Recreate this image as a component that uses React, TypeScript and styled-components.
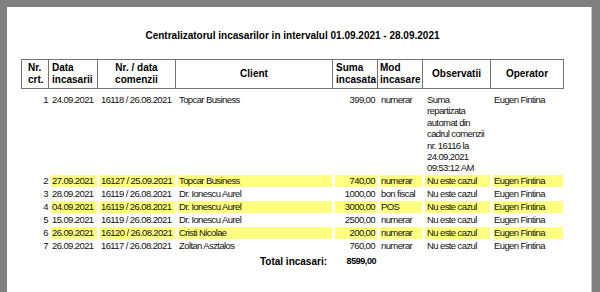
import React from "react";
import styled, { createGlobalStyle } from "styled-components";

const COLS = "28px 49px 78px 157px 45px 45px 68px 73px";

type Payment = {
  nr: number;
  date: string;
  order: string;
  client: string;
  sum: string;
  mode: string;
  note: string[];
  operator: string;
  hl?: boolean;
};

const payments: Payment[] = [
  {
    nr: 1,
    date: "24.09.2021",
    order: "16118 / 26.08.2021",
    client: "Topcar Business",
    sum: "399,00",
    mode: "numerar",
    note: [
      "Suma",
      "repartizata",
      "automat din",
      "cadrul comenzii",
      "nr. 16116 la",
      "24.09.2021",
      "09:53:12 AM",
    ],
    operator: "Eugen Fintina",
  },
  { nr: 2, date: "27.09.2021", order: "16127 / 25.09.2021", client: "Topcar Business", sum: "740,00", mode: "numerar", note: ["Nu este cazul"], operator: "Eugen Fintina", hl: true },
  { nr: 3, date: "28.09.2021", order: "16119 / 26.08.2021", client: "Dr. Ionescu Aurel", sum: "1000,00", mode: "bon fiscal", note: ["Nu este cazul"], operator: "Eugen Fintina" },
  { nr: 4, date: "04.09.2021", order: "16119 / 26.08.2021", client: "Dr. Ionescu Aurel", sum: "3000,00", mode: "POS", note: ["Nu este cazul"], operator: "Eugen Fintina", hl: true },
  { nr: 5, date: "15.09.2021", order: "16119 / 26.08.2021", client: "Dr. Ionescu Aurel", sum: "2500,00", mode: "numerar", note: ["Nu este cazul"], operator: "Eugen Fintina" },
  { nr: 6, date: "26.09.2021", order: "16120 / 26.08.2021", client: "Cristi Nicolae", sum: "200,00", mode: "numerar", note: ["Nu este cazul"], operator: "Eugen Fintina", hl: true },
  { nr: 7, date: "26.09.2021", order: "16117 / 26.08.2021", client: "Zoltan Asztalos", sum: "760,00", mode: "numerar", note: ["Nu este cazul"], operator: "Eugen Fintina" },
];

const App = () => {
  return (
    <>
      <GlobalStyle />
      <Page>
        <Sheet>
          <Title>Centralizatorul incasarilor in intervalul 01.09.2021 - 28.09.2021</Title>
          <HeadRow>
            <HeadCell $pl={6}>Nr.<br />crt.</HeadCell>
            <HeadCell $pl={3}>Data<br />incasarii</HeadCell>
            <HeadCell $center>Nr. / data<br />comenzii</HeadCell>
            <HeadCell $center>Client</HeadCell>
            <HeadCell $pl={3}>Suma<br />incasata</HeadCell>
            <HeadCell $pl={2}>Mod<br />incasare</HeadCell>
            <HeadCell $center>Observatii</HeadCell>
            <HeadCell $center>Operator</HeadCell>
          </HeadRow>
          <Body>
            {payments.map((p) => (
              <Row key={p.nr}>
                <NrCell>{p.nr}</NrCell>
                <Cell $hl={p.hl}>{p.date}</Cell>
                <Cell $hl={p.hl}>{p.order}</Cell>
                <Cell $hl={p.hl}>{p.client}</Cell>
                <Cell $hl={p.hl} $right>{p.sum}</Cell>
                <Cell $hl={p.hl}>{p.mode}</Cell>
                <Cell $hl={p.hl} $pl={2}>
                  {p.note.map((line) => (
                    <NoteLine key={line} $multi={p.note.length > 1}>{line}</NoteLine>
                  ))}
                </Cell>
                <Cell $hl={p.hl}>{p.operator}</Cell>
              </Row>
            ))}
          </Body>
          <TotalRow>
            <TotalLabel>Total incasari:</TotalLabel>
            <TotalValue>8599,00</TotalValue>
          </TotalRow>
        </Sheet>
      </Page>
    </>
  );
};

export default App;

const GlobalStyle = createGlobalStyle`
  html, body {
    margin: 0;
    padding: 0;
    width: 600px;
    height: 292px;
    overflow: hidden;
    background: #808080;
  }
`;

const Page = styled.div`
  margin: 7px 0 0 7px;
  width: 585px;
  height: 285px;
  background: #fff;
  border-right: 1px solid #c4c4c4;
  box-sizing: border-box;
  padding: 23px 0 0 14px;
  font-family: "Liberation Sans", Arial, sans-serif;
  color: #111;
`;

const Sheet = styled.div`
  width: 543px;
  display: flex;
  flex-direction: column;
`;

const Title = styled.div`
  text-align: center;
  font-weight: bold;
  font-size: 10px;
  line-height: 12px;
  color: #000;
  margin-bottom: 17px;
`;

const HeadRow = styled.div`
  display: grid;
  grid-template-columns: ${COLS};
  height: 30px;
  box-sizing: border-box;
  border-top: 1px solid #737373;
  border-bottom: 1px solid #737373;
`;

const HeadCell = styled.div<{ $center?: boolean; $pl?: number }>`
  display: flex;
  flex-direction: column;
  justify-content: center;
  align-items: ${(p) => (p.$center ? "center" : "flex-start")};
  text-align: ${(p) => (p.$center ? "center" : "left")};
  padding-left: ${(p) => (p.$pl ? p.$pl : 0)}px;
  border-right: 1px solid #737373;
  font-weight: bold;
  font-size: 10px;
  line-height: 12.5px;
  white-space: nowrap;
  color: #000;

  &:first-child {
    border-left: 1px solid #737373;
  }
`;

const Body = styled.div`
  margin-top: 5px;
  display: flex;
  flex-direction: column;
  gap: 1px;
`;

const Row = styled.div`
  display: grid;
  grid-template-columns: ${COLS};
  font-size: 9.5px;
  letter-spacing: -0.6px;
  line-height: 12px;
`;

const NrCell = styled.div`
  text-align: right;
  padding-right: 1px;
`;

const Cell = styled.div<{ $hl?: boolean; $right?: boolean; $pl?: number }>`
  margin: 0 1px 0 2px;
  padding: 0 ${(p) => (p.$right ? 2 : 0)}px 0 ${(p) => (p.$pl ? p.$pl : 1)}px;
  background: ${(p) => (p.$hl ? "#ffff80" : "transparent")};
  text-align: ${(p) => (p.$right ? "right" : "left")};
  white-space: nowrap;
`;

const NoteLine = styled.div<{ $multi?: boolean }>`
  line-height: ${(p) => (p.$multi ? "11.4px" : "12px")};
`;

const TotalRow = styled.div`
  display: grid;
  grid-template-columns: 312px 45px;
  margin-top: 3px;
  height: 13px;
  align-items: center;
`;

const TotalLabel = styled.div`
  text-align: right;
  padding-right: 6px;
  font-weight: bold;
  font-size: 10px;
  color: #000;
`;

const TotalValue = styled.div`
  text-align: right;
  padding-right: 2px;
  font-weight: bold;
  font-size: 9px;
  letter-spacing: -0.45px;
  color: #000;
`;
